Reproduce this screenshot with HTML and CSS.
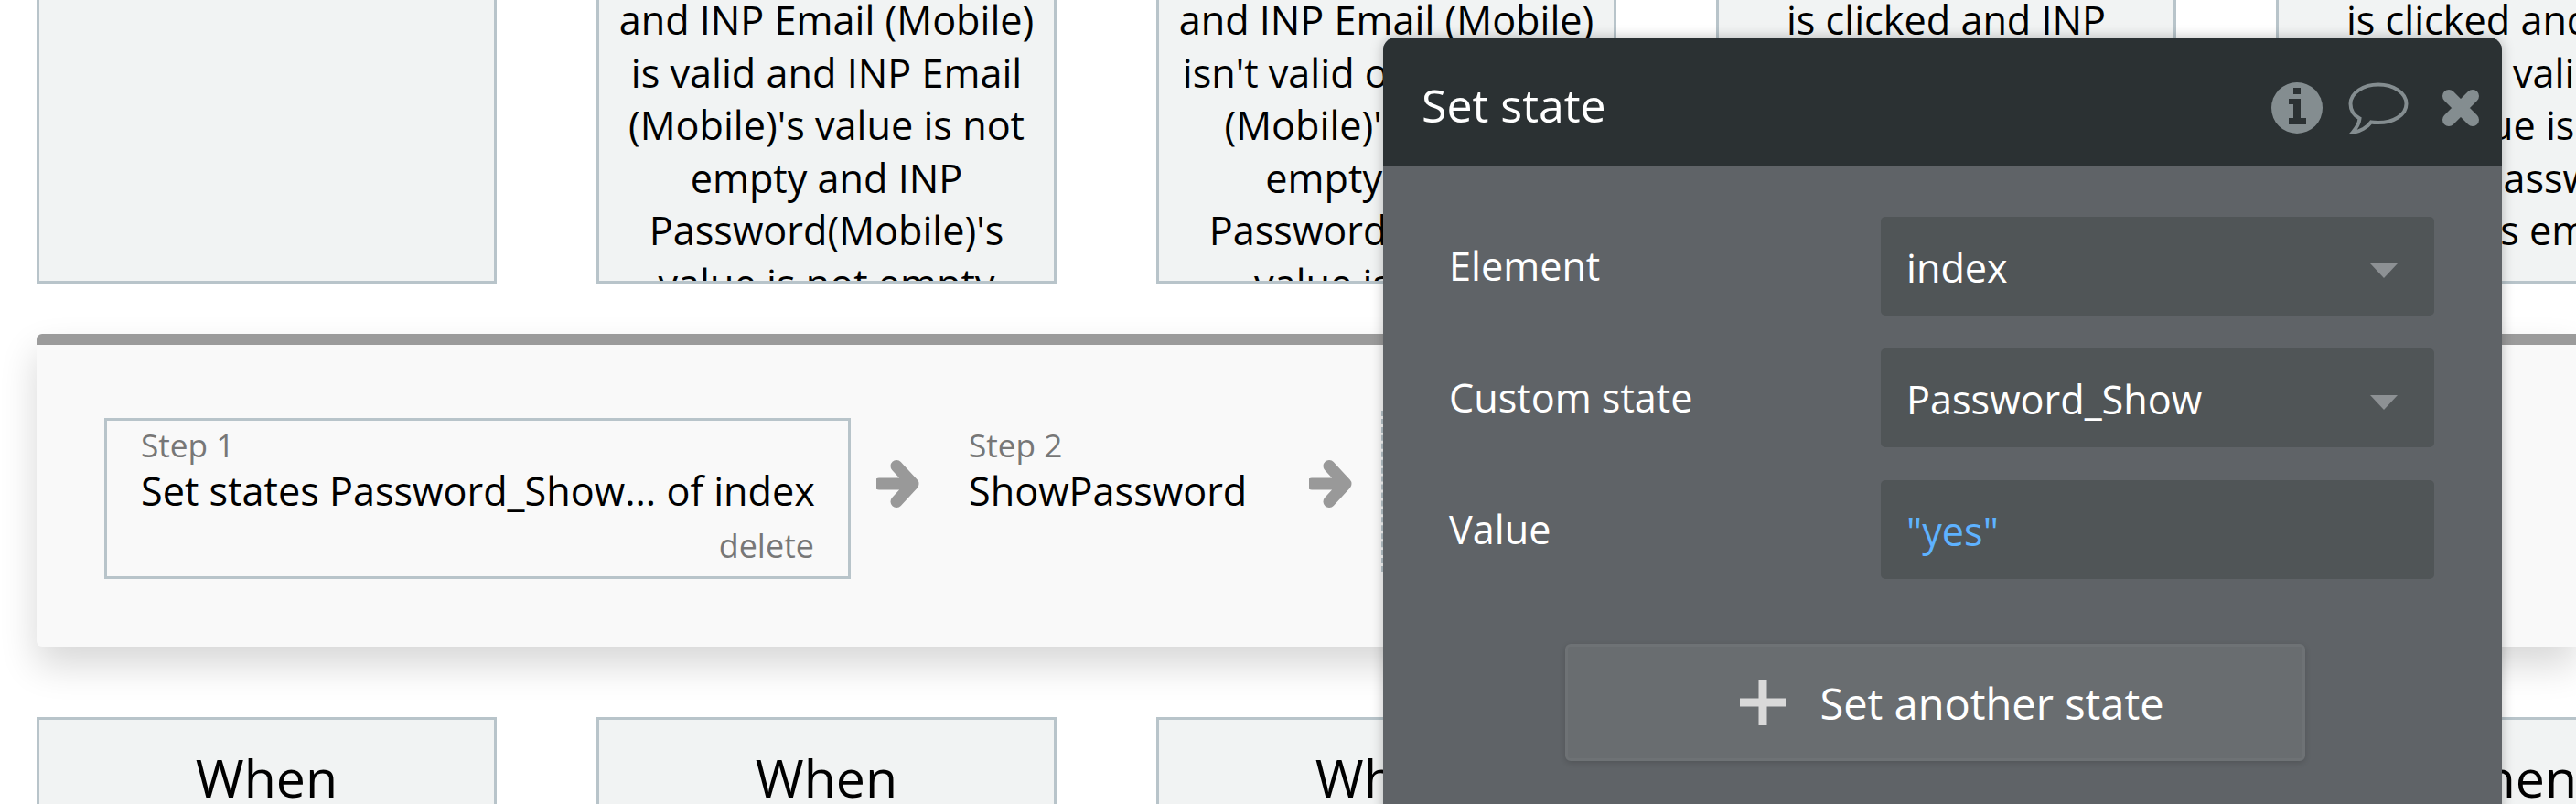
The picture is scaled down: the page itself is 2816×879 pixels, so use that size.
FILE: index.html
```html
<!DOCTYPE html>
<html lang="en">

<head>
    <meta charset="UTF-8">
    <meta name="viewport" content="width=device-width, initial-scale=1.0">
    <title>Set state</title>
    <link rel="stylesheet" href="styles.css">
</head>

<body>
    <section class="events events-top">
        <div class="event"></div>
        <div class="event">and INP Email (Mobile)<br>is valid and INP Email<br>(Mobile)'s value is not<br>empty and INP<br>Password(Mobile)'s<br>value is not empty</div>
        <div class="event">and INP Email (Mobile)<br>isn't valid or INP Email<br>(Mobile)'s value is<br>empty or INP<br>Password(Mobile)'s<br>value is empty</div>
        <div class="event">is clicked and INP<br>Email (Mobile) is valid<br>and INP Email (Mobile)'s<br>value is not empty and<br>INP Password(Mobile)'s<br>value is not empty</div>
        <div class="event">is clicked and INP<br>Email is valid or<br>value is<br>or INP Password<br>Mobile's empty</div>
    </section>

    <section class="workflow">
        <div class="step step-selected">
            <span class="step-num">Step 1</span>
            <span class="step-title">Set states Password_Show... of index</span>
            <span class="step-delete">delete</span>
        </div>
        <svg class="arrow" viewBox="0 0 48 52">
            <path d="M3 26H38M22 6.500L40 26L22 45.500" fill="none" stroke="#999" stroke-width="13" stroke-linecap="round" stroke-linejoin="round"/>
        </svg>
        <div class="step">
            <span class="step-num">Step 2</span>
            <span class="step-title">ShowPassword</span>
        </div>
        <svg class="arrow" viewBox="0 0 48 52">
            <path d="M3 26H38M22 6.500L40 26L22 45.500" fill="none" stroke="#999" stroke-width="13" stroke-linecap="round" stroke-linejoin="round"/>
        </svg>
        <div class="step-add"></div>
    </section>

    <section class="events events-bottom">
        <div class="event">When</div>
        <div class="event">When</div>
        <div class="event">When</div>
        <div class="event">When</div>
        <div class="event">When</div>
    </section>

    <div class="panel">
        <header class="panel-head">
            <span class="panel-title">Set state</span>
            <div class="panel-icons">
                <svg class="icon-info" viewBox="0 0 56 56">
                    <circle cx="28" cy="28" r="28" fill="#848d90"/>
                    <path d="M24 6H32V13H24ZM19 18H32V39H38V46H19V39H24V24H19Z" fill="#2b3133"/>
                </svg>
                <svg class="icon-chat" viewBox="0 0 66 56">
                    <path d="M33 2.500C49 2.500 63.500 11 63.500 23.500C63.500 36 49 44 33 44C30 44 27.500 44 25 43.500C21 49 13 54 5 54.500C8 51 12 45 12.500 39.500C6 36 2.500 30 2.500 23.500C2.500 11 17 2.500 33 2.500Z" fill="none" stroke="#848d90" stroke-width="4"/>
                </svg>
                <svg class="icon-close" viewBox="0 0 44 44">
                    <path d="M9 9L35 35M35 9L9 35" stroke="#848d90" stroke-width="14" stroke-linecap="round"/>
                </svg>
            </div>
        </header>
        <div class="panel-body">
            <div class="field">
                <label class="field-label">Element</label>
                <div class="field-input">index<span class="caret"></span></div>
            </div>
            <div class="field">
                <label class="field-label">Custom state</label>
                <div class="field-input">Password_Show<span class="caret"></span></div>
            </div>
            <div class="field">
                <label class="field-label">Value</label>
                <div class="field-input field-value">"yes"</div>
            </div>
            <div class="add-btn">
                <svg class="add-plus" viewBox="0 0 50 50">
                    <path d="M20.500 0H29.500V20.500H50V29.500H29.500V50H20.500V29.500H0V20.500H20.500Z" fill="#d9d9d9"/>
                </svg>
                <span class="add-text">Set another state</span>
            </div>
        </div>
    </div>
</body>

</html>
```

FILE: styles.css
```css
html,
body {
    height: 879px;
    margin: 0;
    overflow: hidden;
}

body {
    background-color: #fff;
    color: #000;
    font-family: "Open Sans", sans-serif;
    font-size: 43.2px;
    line-height: 57.6px;
    position: relative;
}

.events {
    display: flex;
    gap: 109px;
    padding-left: 40px;
}

.event {
    background-color: #f1f3f3;
    border: 3px solid #b8c4ca;
    box-sizing: border-box;
    flex: 0 0 503px;
    overflow: hidden;
    text-align: center;
    white-space: nowrap;
}

.events-top {
    height: 310px;
}

.events-top .event {
    height: 400px;
    margin-top: -90px;
    padding-top: 80px;
}

.events-bottom {
    margin-top: 77px;
}

.events-bottom .event {
    font-size: 57.3px;
    height: 200px;
    line-height: 76px;
    padding-top: 25px;
}

.workflow {
    align-items: flex-start;
    background-color: #f9f9f9;
    border-radius: 6px 0 0 6px;
    border-top: 12px solid #9b9b9b;
    box-shadow: 0 20px 40px rgba(0, 0, 0, 0.16);
    box-sizing: border-box;
    display: flex;
    height: 342px;
    margin: 55px 0 0 40px;
    padding: 80px 0 0 74px;
}

.step {
    border: 3px solid transparent;
    box-sizing: border-box;
    display: flex;
    flex-direction: column;
    height: 176px;
    padding: 0 37px;
    white-space: nowrap;
}

.step-selected {
    border-color: #b8c4ca;
    width: 816px;
}

.step-num {
    color: #777;
    font-size: 35.2px;
    line-height: 47px;
    margin-top: 3px;
}

.step-title {
    margin-top: -2px;
}

.step-delete {
    color: #777;
    font-size: 35.9px;
    line-height: 47px;
    margin-top: 7px;
    text-align: right;
}

.arrow {
    flex: none;
    height: 52px;
    margin: 46px 13px 0 28px;
    width: 48px;
}

.step-add {
    border: 3px dashed #b8c4ca;
    box-sizing: border-box;
    flex: none;
    height: 176px;
    margin: -8px 0 0 18px;
    width: 300px;
}

/* popup over the workflow */
.panel {
    background-color: #5f6367;
    border-radius: 14px 14px 0 0;
    box-shadow: 0 0 14px rgba(0, 0, 0, 0.25);
    color: #fff;
    height: 900px;
    left: 1512px;
    position: absolute;
    top: 41px;
    width: 1223px;
}

.panel-head {
    align-items: center;
    background-color: #2b3133;
    border-radius: 14px 14px 0 0;
    display: flex;
    height: 141px;
    justify-content: space-between;
    padding-left: 42px;
}

.panel-title {
    font-size: 50px;
    margin-top: 8px;
}

.panel-icons {
    align-items: center;
    display: flex;
    margin-top: 13px;
    padding-right: 23px;
}

.icon-info {
    height: 56px;
    width: 56px;
}

.icon-chat {
    height: 56px;
    margin-left: 28px;
    width: 66px;
}

.icon-close {
    height: 44px;
    margin-left: 35px;
    width: 44px;
}

.panel-body {
    padding: 55px 74px 0 72px;
}

.field {
    align-items: center;
    display: flex;
    justify-content: space-between;
    margin-bottom: 36px;
}

.field-input {
    align-items: center;
    background-color: #505557;
    border-radius: 5px;
    box-sizing: border-box;
    display: flex;
    height: 108px;
    justify-content: space-between;
    padding: 3px 40px 0 28px;
    width: 605px;
}

.field-value {
    color: #5eb2ff;
}

.caret {
    border-left: 15px solid transparent;
    border-right: 15px solid transparent;
    border-top: 16px solid #8d9194;
    margin-top: 6px;
}

.add-btn {
    align-items: center;
    background-color: #696d70;
    border: 3px solid #6e7275;
    border-radius: 6px;
    box-shadow: 0 2px 6px rgba(0, 0, 0, 0.15);
    box-sizing: border-box;
    display: flex;
    font-size: 47px;
    gap: 37px;
    height: 128px;
    justify-content: center;
    margin: 71px 0 0 127px;
    padding-left: 37px;
    width: 809px;
}

.add-plus {
    height: 50px;
    width: 50px;
}

.add-text {
    margin-top: 4px;
}
```
